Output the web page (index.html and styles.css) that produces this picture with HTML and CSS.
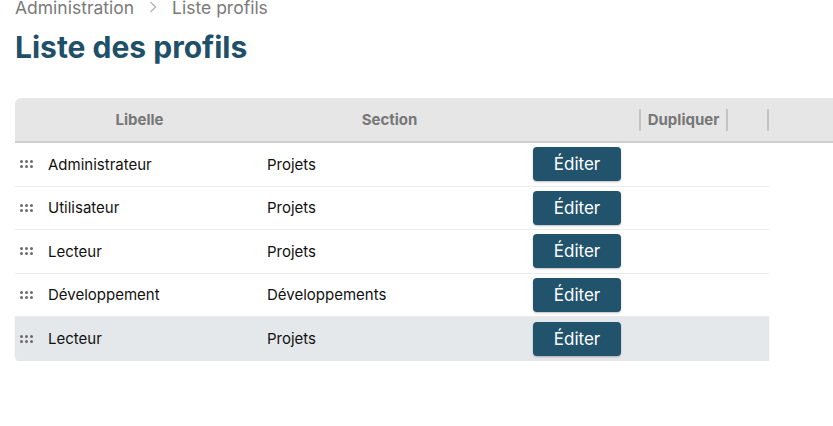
FILE: index.html
```html
<!DOCTYPE html>
<html lang="fr">
<head>
<meta charset="utf-8">
<title>Liste des profils</title>
<link rel="stylesheet" href="styles.css">
</head>
<body>
<nav class="breadcrumb">
  <span class="crumb">Administration</span>
  <svg class="chev" width="10" height="14" viewBox="0 0 10 14"><path d="M2.5 2 L7.5 7 L2.5 12" fill="none" stroke="#b5b5b5" stroke-width="1.4"/></svg>
  <span class="crumb">Liste profils</span>
</nav>
<h1 class="title">Liste des profils</h1>

<div class="table">
  <div class="thead">
    <div class="th th-libelle">Libelle</div>
    <div class="th th-section">Section</div>
    <div class="th th-action"></div>
    <div class="th th-dup sep">Dupliquer</div>
    <div class="th th-x sep"></div>
    <div class="th th-rest sep"></div>
  </div>
  <div class="tbody">
    <div class="row">
      <span class="handle"><i></i><i></i><i></i><i></i><i></i><i></i></span>
      <span class="cell">Administrateur</span>
      <span class="cell">Projets</span>
      <span class="cell"><button class="btn">Éditer</button></span>
    </div>
    <div class="row">
      <span class="handle"><i></i><i></i><i></i><i></i><i></i><i></i></span>
      <span class="cell">Utilisateur</span>
      <span class="cell">Projets</span>
      <span class="cell"><button class="btn">Éditer</button></span>
    </div>
    <div class="row">
      <span class="handle"><i></i><i></i><i></i><i></i><i></i><i></i></span>
      <span class="cell">Lecteur</span>
      <span class="cell">Projets</span>
      <span class="cell"><button class="btn">Éditer</button></span>
    </div>
    <div class="row">
      <span class="handle"><i></i><i></i><i></i><i></i><i></i><i></i></span>
      <span class="cell">Développement</span>
      <span class="cell">Développements</span>
      <span class="cell"><button class="btn">Éditer</button></span>
    </div>
    <div class="row row-active">
      <span class="handle"><i></i><i></i><i></i><i></i><i></i><i></i></span>
      <span class="cell">Lecteur</span>
      <span class="cell">Projets</span>
      <span class="cell"><button class="btn">Éditer</button></span>
    </div>
  </div>
</div>
</body>
</html>
```
FILE: styles.css
```css
html, body {
  margin: 0;
  padding: 0;
  background: #ffffff;
  font-family: Inter, "Noto Sans", sans-serif;
  overflow: hidden;
}

body {
  padding: 0 0 0 15px;
}

.breadcrumb {
  display: flex;
  align-items: center;
  gap: 14px;
  height: 18px;
  margin-top: -2px;
  font-size: 17.5px;
  color: #7a7a7a;
}

.chev {
  display: block;
}

.title {
  margin: 12px 0 0 0;
  font-size: 30px;
  line-height: 38px;
  font-weight: 700;
  color: #1f5069;
}

.table {
  margin-top: 32px;
}

.thead {
  display: flex;
  height: 43px;
  background: #e6e6e6;
  border-bottom: 2px solid #cfcfcf;
  border-top-left-radius: 6px;
  align-items: center;
}

.th {
  font-size: 15px;
  font-weight: 700;
  color: #777777;
  text-align: center;
  height: 22px;
  line-height: 22px;
  box-sizing: border-box;
}

.th-libelle { width: 249px; }
.th-section { width: 251px; }
.th-action { width: 124px; }
.th-dup { width: 87px; }
.th-x { width: 41px; }
.th-rest { flex: 1; }

.sep {
  border-left: 2px solid #c4c4c4;
}

.tbody {
  width: 754px;
}

.row {
  display: grid;
  grid-template-columns: 33px 219px 266px 1fr;
  align-items: center;
  box-sizing: border-box;
  height: 43.5px;
  border-bottom: 1px solid #ececec;
  font-size: 15px;
  color: #111111;
}

.row:last-child {
  border-bottom: none;
}

.row-active {
  background: #e4e8eb;
  border-bottom-left-radius: 6px;
  box-shadow: 0 1px 2px rgba(0, 0, 0, 0.12);
}

.handle {
  display: grid;
  grid-template-columns: repeat(3, 3px);
  grid-template-rows: repeat(2, 3px);
  gap: 2px;
  padding-left: 5px;
}

.handle i {
  display: block;
  width: 3px;
  height: 3px;
  border-radius: 50%;
  background: #6b6b6b;
}

.cell {
  white-space: nowrap;
}

.btn {
  width: 88px;
  height: 34px;
  border: none;
  border-radius: 4px;
  background: #21536d;
  color: #ffffff;
  font-family: Inter, "Noto Sans", sans-serif;
  font-size: 17px;
  box-shadow: 0 1px 2px rgba(0, 0, 0, 0.25);
  padding: 0;
  cursor: pointer;
}
```
